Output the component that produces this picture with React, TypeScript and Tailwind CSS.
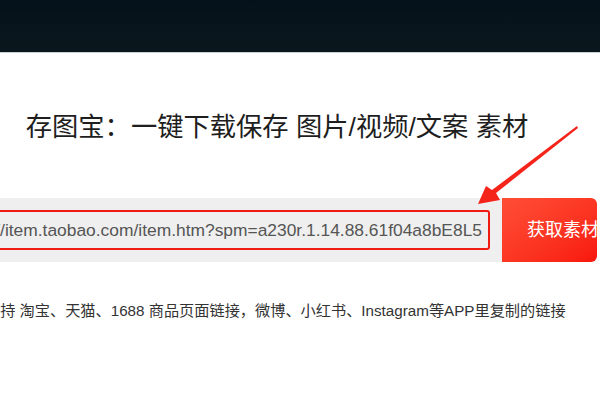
import React from 'react';

const FONT = '"Liberation Sans", "Noto Sans CJK SC", sans-serif';

// red hand-drawn style pointer from the title toward the input box
function Arrow() {
  return (
    <svg
      className="absolute left-0 top-0 pointer-events-none"
      width="600"
      height="400"
      viewBox="0 0 600 400"
    >
      <polygon
        points="577,126 578,128 496,193 500,200 478,204 486,186 492,190"
        fill="#f5241a"
      />
    </svg>
  );
}

export default function App() {
  return (
    <div
      className="relative w-[600px] h-[400px] overflow-hidden bg-white"
      style={{ fontFamily: FONT }}
    >
      <div className="h-[53px] bg-gradient-to-b from-[#05111a] to-[#0a181e] border-b border-[#c9d0d3]" />

      <div className="ml-[-43px] w-[640px]">
        <h1 className="mt-[56px] text-center text-[26.3px] leading-[36px] text-[#1e1e1e]">
          存图宝：一键下载保存 图片/视频/文案 素材
        </h1>

        <div className="mt-[53px] flex h-[64px]">
          <div className="flex w-[545px] items-center bg-[#efefef] pl-[10px] pr-[12px]">
            <div className="flex h-[40px] flex-1 items-center justify-end overflow-hidden rounded-[3px] border-2 border-[#f01c14] pr-[6px]">
              <span className="whitespace-nowrap text-[17.4px] text-[#555]">
                https://item.taobao.com/item.htm?spm=a230r.1.14.88.61f04a8bE8L5
              </span>
            </div>
          </div>
          <button className="flex w-[95px] items-center whitespace-nowrap rounded-r-[6px] bg-gradient-to-br from-[#ff4d35] to-[#f8140c] pl-[25px] text-[18px] text-white">
            获取素材
          </button>
        </div>

        <p className="mt-[38px] pl-[28px] whitespace-nowrap text-[15.2px] leading-[22px] text-[#333]">
          支持 淘宝、天猫、1688 商品页面链接，微博、小红书、Instagram等APP里复制的链接
        </p>
      </div>

      <Arrow />
    </div>
  );
}
